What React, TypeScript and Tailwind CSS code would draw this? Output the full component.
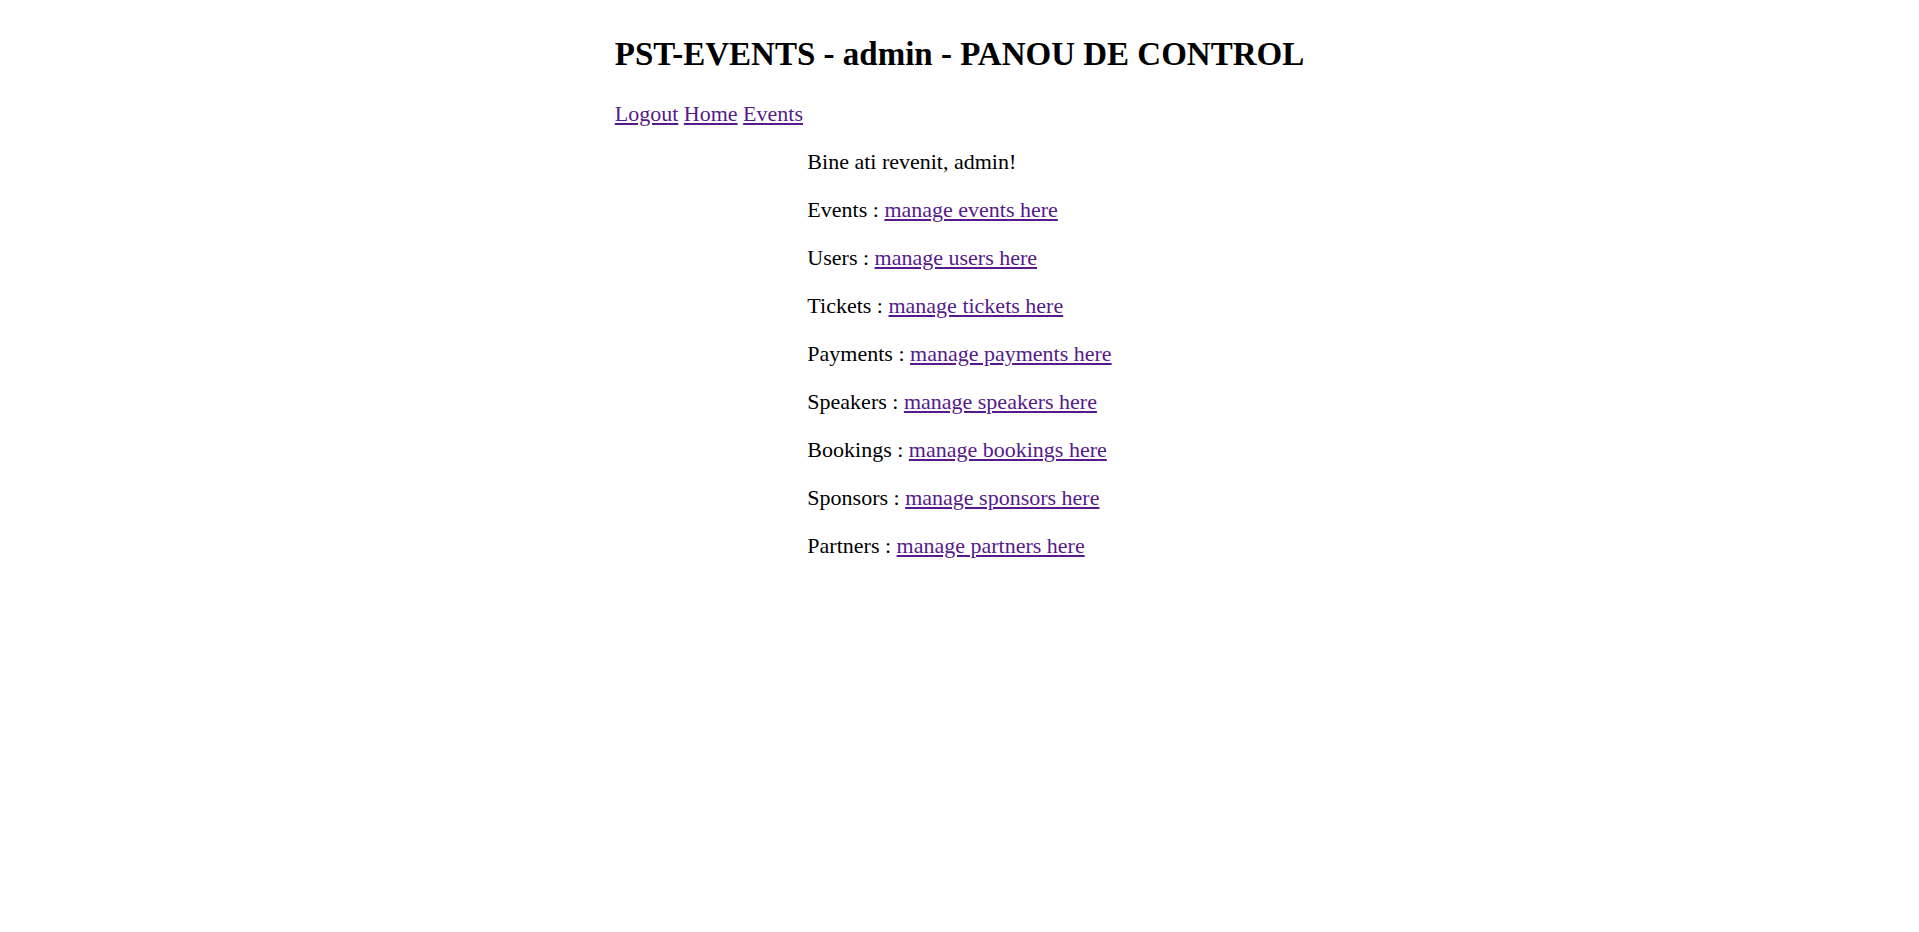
const SECTIONS = [
  { label: "Events", link: "manage events here" },
  { label: "Users", link: "manage users here" },
  { label: "Tickets", link: "manage tickets here" },
  { label: "Payments", link: "manage payments here" },
  { label: "Speakers", link: "manage speakers here" },
  { label: "Bookings", link: "manage bookings here" },
  { label: "Sponsors", link: "manage sponsors here" },
  { label: "Partners", link: "manage partners here" },
];

function NavLink({ children }: { children: React.ReactNode }) {
  return (
    <a href="#" className="text-[#551a8b] underline">
      {children}
    </a>
  );
}

export default function App() {
  return (
    <div className="min-h-screen bg-white text-black font-['Liberation_Serif','Times_New_Roman',serif]">
      <div className="w-fit mx-auto pt-[35px]">
        <h1 className="text-[33px] leading-[38px] font-bold">
          PST-EVENTS - admin - PANOU DE CONTROL
        </h1>

        <nav className="mt-[28px] text-[22px] leading-[26px]">
          <NavLink>Logout</NavLink> <NavLink>Home</NavLink>{" "}
          <NavLink>Events</NavLink>
        </nav>

        <div className="w-fit mx-auto mt-[22px] flex flex-col gap-[22px] text-[22px] leading-[26px]">
          <p>Bine ati revenit, admin!</p>
          {SECTIONS.map((s) => (
            <p key={s.label}>
              {s.label} : <NavLink>{s.link}</NavLink>
            </p>
          ))}
        </div>
      </div>
    </div>
  );
}
